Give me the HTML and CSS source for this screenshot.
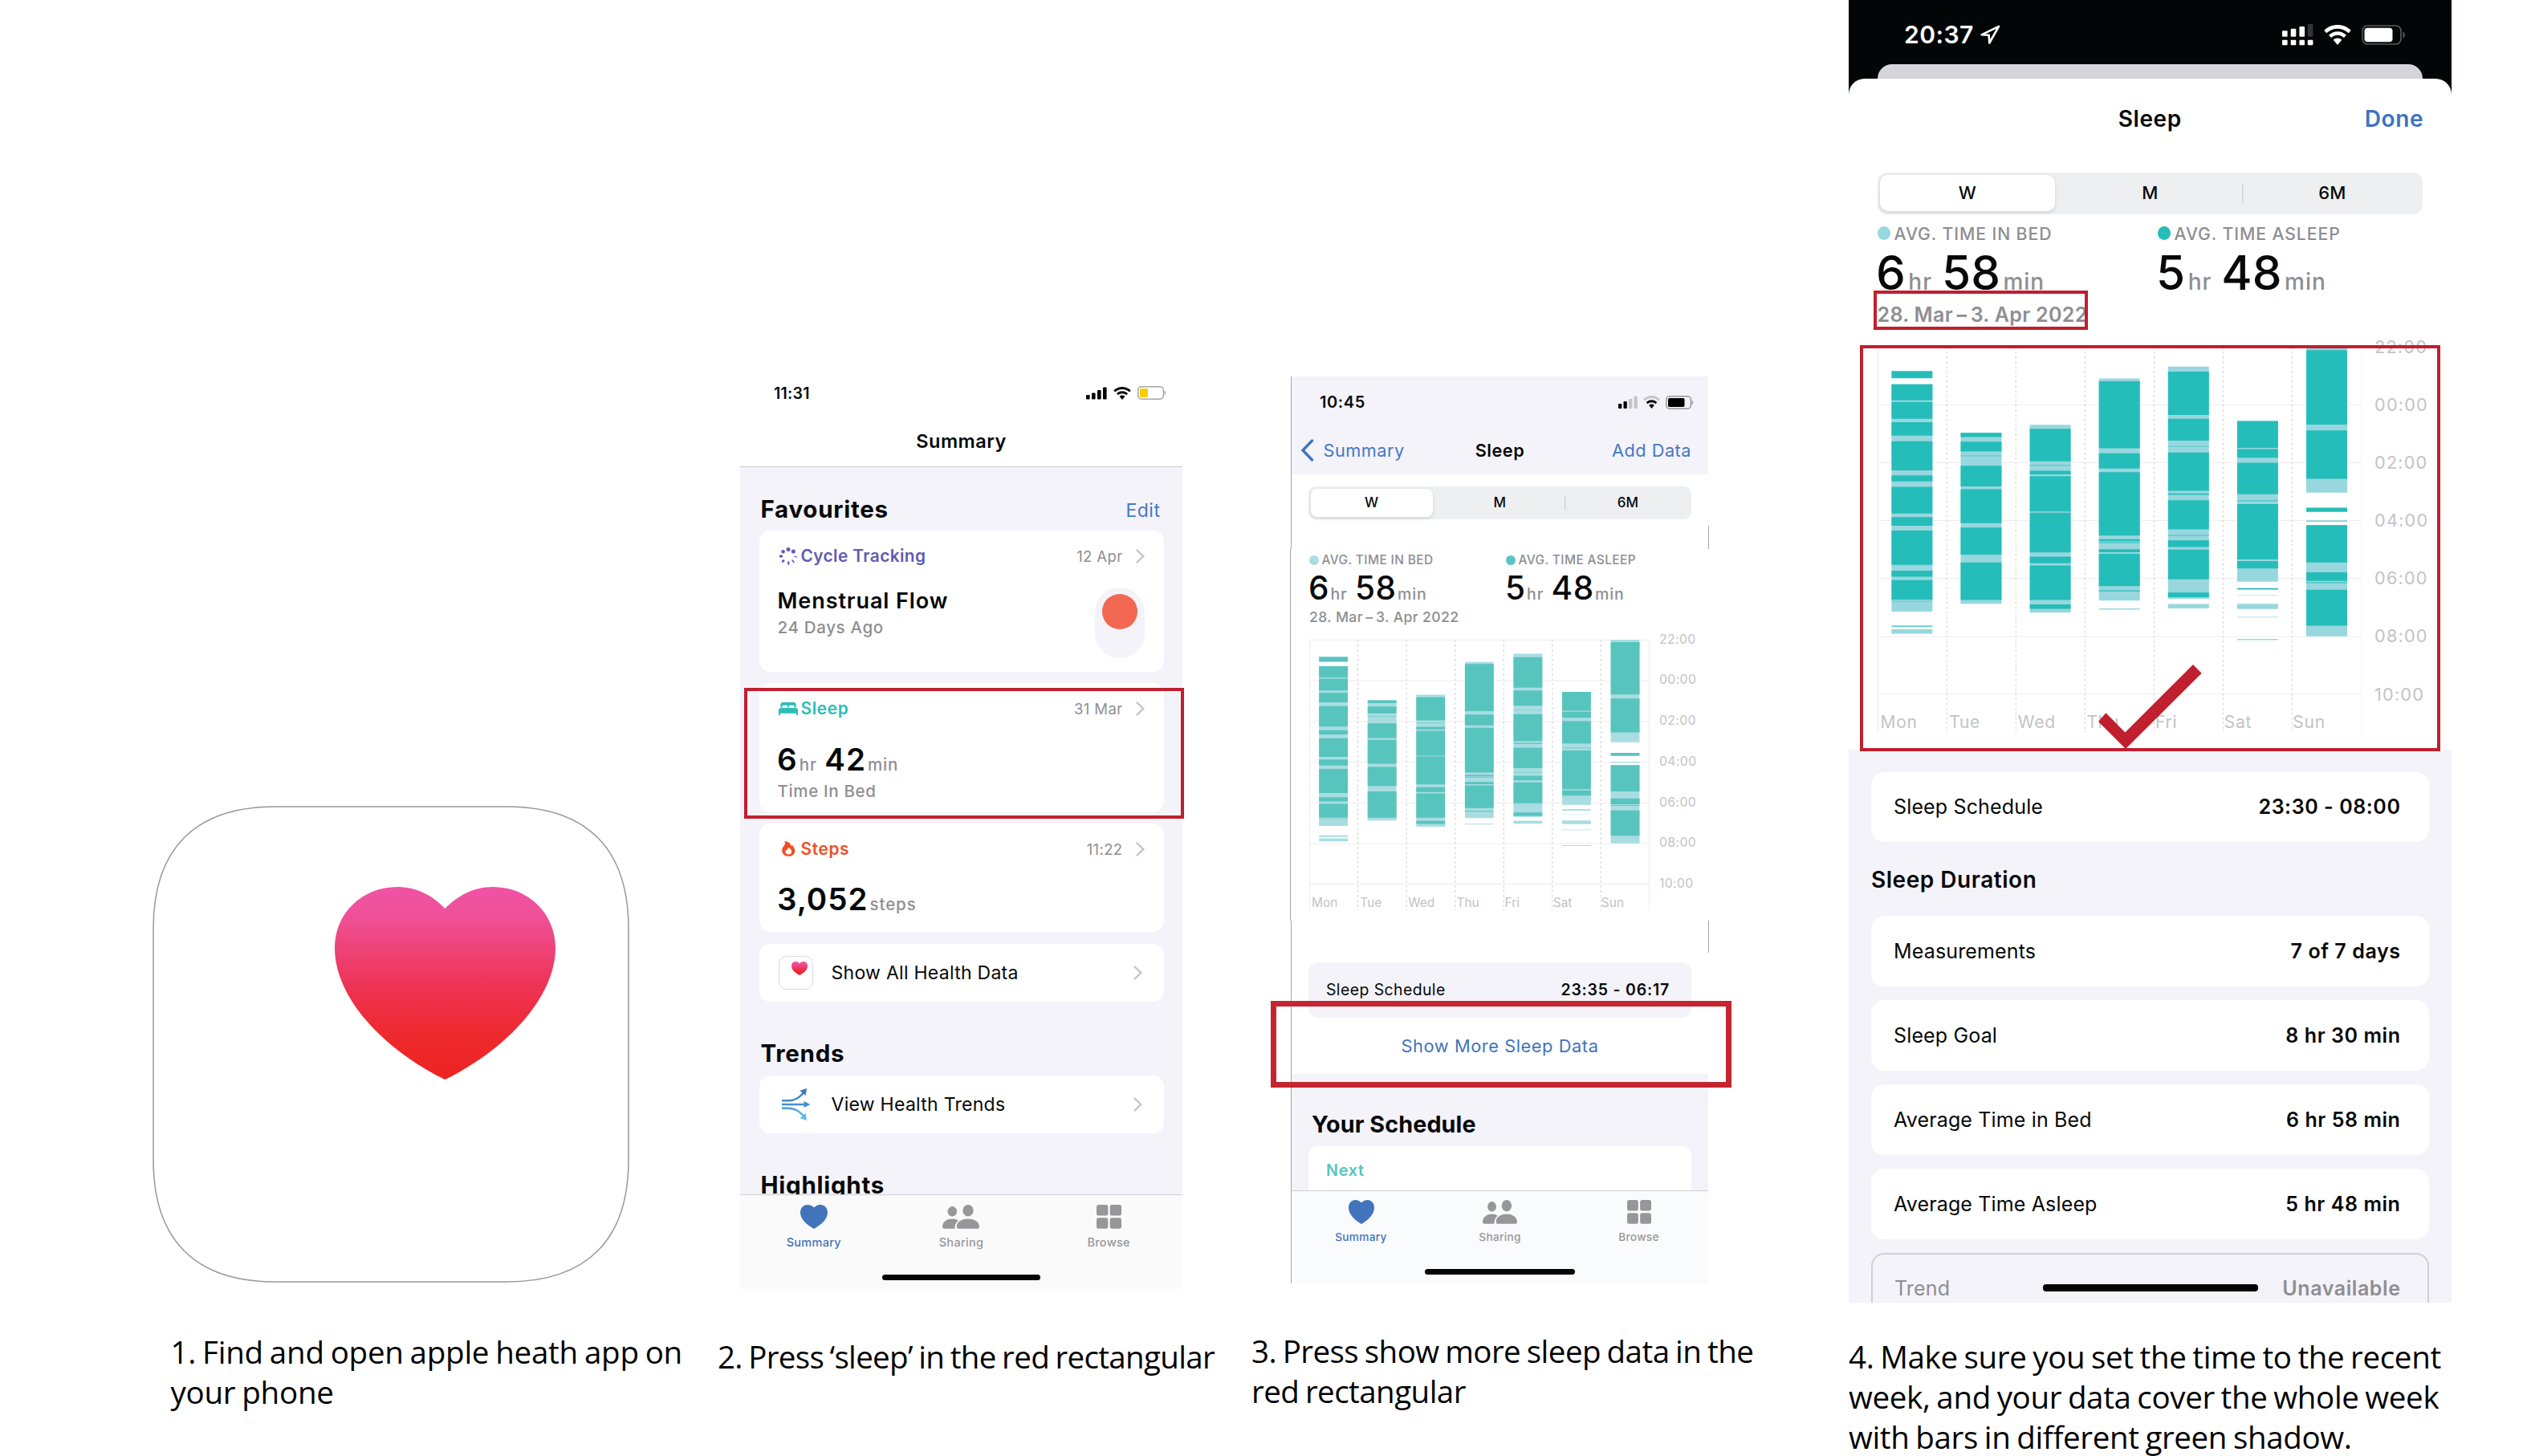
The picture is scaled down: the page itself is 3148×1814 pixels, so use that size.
FILE: index.html
```html
<!DOCTYPE html>
<html lang="en">
<head>
<meta charset="utf-8">
<title>How to find your sleep data</title>
<link rel="stylesheet" href="styles.css">
</head>
<body>
<svg class="defs" aria-hidden="true">
  <defs>
    <linearGradient id="pink-red" x1="0" y1="0" x2="0" y2="1">
      <stop offset="0" stop-color="#ef53a4"/>
      <stop offset=".15" stop-color="#ef5098"/>
      <stop offset=".52" stop-color="#ee3354"/>
      <stop offset=".75" stop-color="#ee2a30"/>
      <stop offset="1" stop-color="#ed2320"/>
    </linearGradient>
    <linearGradient id="blues" gradientUnits="userSpaceOnUse" x1="0" y1="0" x2="0" y2="40">
      <stop offset="0" stop-color="#3b6fb9"/>
      <stop offset=".5" stop-color="#4190d0"/>
      <stop offset="1" stop-color="#68c4f0"/>
    </linearGradient>
  </defs>
  <symbol id="heart" viewBox="0 0 34 30" preserveAspectRatio="none"><path d="M17 3.600C19 1.200 22 0 25 0c5 0 9 4 9 9.400C34 18.500 25 25.500 17 30 9 25.500 0 18.500 0 9.400 0 4 4 0 9 0c3 0 6 1.200 8 3.600z"/></symbol>
  <symbol id="people" viewBox="0 0 46 30" preserveAspectRatio="none"><ellipse cx="12.300" cy="8.300" rx="5.800" ry="6.200"/><ellipse cx="32" cy="7.200" rx="6.600" ry="7.200"/><path d="M0 27c0-5 5-9.500 12.300-9.500 3 0 5.600.8 7.600 2-2.800 2.400-4.400 5.800-4.400 8.800 0 .6 0 1.100.3 1.500H2.500C.8 29.800 0 28.800 0 27z"/><path d="M17.800 27c0-5 5.600-9.500 14.100-9.500S46 22 46 27c0 1.900-.9 2.800-2.600 2.800h-23c-1.700 0-2.600-.9-2.600-2.800z"/></symbol>
  <symbol id="tiles" viewBox="0 0 31 30" preserveAspectRatio="none"><rect width="14.300" height="13.600" rx="2.500"/><rect x="16.700" width="14.300" height="13.600" rx="2.500"/><rect y="16.200" width="14.300" height="13.600" rx="2.500"/><rect x="16.700" y="16.200" width="14.300" height="13.600" rx="2.500"/></symbol>
  <symbol id="chev" viewBox="0 0 11 18"><path d="M1.500 1.500 9.300 9l-7.800 7.500" fill="none" stroke="#c3c3c6" stroke-width="2.300" stroke-linecap="round"/></symbol>
  <symbol id="wifi" viewBox="0 0 22 16" preserveAspectRatio="none"><path class="far" d="M11 0C6.800 0 3 1.700.2 4.400l2 2.100C4.500 4.300 7.600 3 11 3s6.500 1.300 8.800 3.500l2-2.100C19 1.700 15.200 0 11 0z"/><path d="M11 5.300c-2.800 0-5.300 1.100-7.100 2.900l2 2.100C7.200 9 9 8.200 11 8.200s3.800.8 5.100 2.100l2-2.100C16.300 6.400 13.800 5.300 11 5.300z"/><path d="M11 10.600c-1.300 0-2.500.5-3.400 1.400L11 16l3.400-4c-.9-.9-2.100-1.400-3.400-1.400z"/></symbol>
  <symbol id="bars" viewBox="0 64 700 1258" preserveAspectRatio="none">
    <path class="inbed" d="M20.100 200h59.200v823h-59.200zM20.100 1087h59.200v16h-59.200zM120.100 376h59.200v619h-59.200zM220.100 347h59.200v680h-59.200zM320.100 179h59.200v804h-59.200zM320.100 1012h59.200v4h-59.200zM420.100 136h59.200v841h-59.200zM420.100 996h59.200v16h-59.200zM520.100 333h59.200v582h-59.200zM520.100 962h59.200v1.500h-59.200zM520.100 995h59.200v19h-59.200zM520.100 1042h59.200v2.500h-59.200zM520.100 1122.500h59.200v4h-59.200zM620.100 64h59.200v528h-59.200zM620.100 693h59.200v5h-59.200zM620.100 710h59.200v403h-59.200z"/>
    <path class="asleep" d="M20.100 152h59.200v26h-59.200zM20.100 200h59.200v58h-59.200zM20.100 264h59.200v61h-59.200zM20.100 337h59.200v49h-59.200zM20.100 406h59.200v106h-59.200zM20.100 530h59.200v22h-59.200zM20.100 571h59.200v97h-59.200zM20.100 681h59.200v31h-59.200zM20.100 730h59.200v124h-59.200zM20.100 875h59.200v22h-59.200zM20.100 909h59.200v71h-59.200zM20.100 1074h59.200v4h-59.200z
      M120.100 376h59.200v15h-59.200zM120.100 408h59.200v35h-59.200zM120.100 495h59.200v75h-59.200zM120.100 580h59.200v123h-59.200zM120.100 719h59.200v98h-59.200zM120.100 845h59.200v136h-59.200z
      M220.100 361h59.200v118h-59.200zM220.100 513h59.200v13h-59.200zM220.100 533h59.200v128h-59.200zM220.100 665h59.200v144h-59.200zM220.100 824h59.200v24h-59.200zM220.100 856h59.200v125h-59.200zM220.100 997h59.200v16h-59.200z
      M320.100 189h59.200v243h-59.200zM320.100 450h59.200v55h-59.200zM320.100 518h59.200v230h-59.200zM320.100 761h59.200v7h-59.200zM320.100 771.500h59.200v3h-59.200zM320.100 797h59.200v11h-59.200zM320.100 814h59.200v117h-59.200zM320.100 946h59.200v4h-59.200z
      M420.100 154h59.200v157h-59.200zM420.100 325h59.200v79h-59.200zM420.100 447h59.200v139h-59.200zM420.100 595h59.200v5h-59.200zM420.100 620h59.200v105h-59.200zM420.100 765h59.200v24h-59.200zM420.100 799h59.200v107h-59.200zM420.100 954h59.200v17h-59.200z
      M520.100 333h59.200v97h-59.200zM520.100 435h59.200v31h-59.200zM520.100 484h59.200v114h-59.200zM520.100 634h59.200v200h-59.200zM520.100 840h59.200v27h-59.200zM520.100 938h59.200v5h-59.200z
      M620.100 76h59.200v270h-59.200zM620.100 367h59.200v175h-59.200zM620.100 647h59.200v15h-59.200zM620.100 710h59.200v135h-59.200zM620.100 881h59.200v31h-59.200zM620.100 917h59.200v3h-59.200zM620.100 944h59.200v130h-59.200z"/>
    <path class="asleep dozing" d="M20.100 984h59.200v3h-59.200zM120.100 457h59.200v4h-59.200zM220.100 491h59.200v4h-59.200zM420.100 423.500h59.200v3h-59.200zM420.100 746h59.200v4h-59.200zM520.100 619h59.200v5h-59.200zM620.100 694h59.200v3h-59.200z"/>
  </symbol>
</svg>

<main class="guide">

  <section class="step step-1">
    <svg class="app-icon" viewBox="0 0 594 594">
      <path d="M153 1H441C541 1 593 53 593 153V441C593 541 541 593 441 593H153C53 593 1 541 1 441V153C1 53 53 1 153 1z" fill="#fff" stroke="#98989a" stroke-width="1.500"/>
      <path d="M364.400 128C380 112 400 101 424 101 468 101 502 134 502 177 502 240 438 305 364.400 341 290 305 227 240 227 177 227 134 261 101 305 101 329 101 349 112 364.400 128z" fill="url(#pink-red)"/>
    </svg>
    <p class="caption">1. Find and open apple heath app on<br>your phone</p>
  </section>

  <section class="step step-2">
    <div class="phone">
      <div class="status">
        <span class="clock">11:31</span>
        <span class="status-icons">
          <svg width="26" height="16" viewBox="0 0 26 16"><rect y="10" width="4.600" height="5.500" rx="1"/><rect x="7" y="7.500" width="4.600" height="8" rx="1"/><rect x="14" y="4" width="4.600" height="11.500" rx="1"/><rect x="21" y=".5" width="4.600" height="15" rx="1"/></svg>
          <svg class="wifi" width="22" height="16"><use href="#wifi"/></svg>
          <svg width="36" height="17" viewBox="0 0 36 17"><rect x=".8" y=".8" width="31.600" height="15.400" rx="4.200" fill="none" stroke="#a5a5a7" stroke-width="1.500"/><path d="M33.600 5.500c2 .8 2 5.200 0 6z" fill="#a5a5a7"/><rect x="3" y="3" width="10" height="11" rx="1.800" fill="#fc0"/></svg>
        </span>
      </div>
      <h1 class="nav-title">Summary</h1>
      <div class="scroll">
        <div class="section-head first"><h2>Favourites</h2><a class="link">Edit</a></div>
        <article class="card cycle">
          <header><svg width="24" height="22" viewBox="0 0 24 22" fill="#5f5bb3"><circle cx="12" cy="2.500" r="2.500"/><circle cx="18.300" cy="5" r="2.500"/><circle cx="5.600" cy="5.200" r="2.300"/><ellipse cx="3" cy="11" rx="2.300" ry="1.800"/><ellipse cx="5.600" cy="17" rx="2.200" ry="1.500" transform="rotate(-45 5.600 17)"/><ellipse cx="12.300" cy="19.500" rx="1.200" ry="2.400"/><ellipse cx="18" cy="17.300" rx=".9" ry="2.600" transform="rotate(-35 18 17.300)"/><ellipse cx="21" cy="11.700" rx="2.300" ry=".6" transform="rotate(15 21 11.700)"/></svg><b class="violet">Cycle Tracking</b><time>12 Apr</time><svg class="chev"><use href="#chev"/></svg></header>
          <div class="cycle-body">
            <div><h3>Menstrual Flow</h3><p class="note">24 Days Ago</p></div>
            <span class="pill"><i></i></span>
          </div>
        </article>
        <article class="card sleep">
          <header><svg width="24" height="16" viewBox="0 0 24 16" fill="#2bbdb9"><path d="M2.300 6.500V3C2.300 1 3.400 0 5.200 0h13.600c1.800 0 2.900 1 2.900 3v3.500h-2.200V5c0-.9-.5-1.300-1.300-1.300h-4c-.8 0-1.300.4-1.300 1.300v1.500h-1.800V5c0-.9-.5-1.300-1.300-1.300h-4C5 3.700 4.500 4.100 4.500 5v1.500z"/><path d="M0 15.300V10c0-1.900 1-2.900 2.800-2.900h18.400C23 7.100 24 8.100 24 10v5.300c0 .4-.3.700-.7.700h-.7c-.4 0-.7-.3-.7-.7v-1.600H2.100v1.600c0 .4-.3.700-.7.700H.7c-.4 0-.7-.3-.7-.7z"/></svg><b class="teal">Sleep</b><time>31 Mar</time><svg class="chev"><use href="#chev"/></svg></header>
          <p class="figure"><b>6</b><i>hr</i><b>42</b><i>min</i></p>
          <p class="note">Time In Bed</p>
        </article>
        <article class="card steps">
          <header><svg width="24" height="19" viewBox="-4 0 24 19"><path d="M3 .3C7.500 0 11 2.600 11.600 6.200c.6-.4.8-1 .8-1.700 2.400 2.200 3.800 4.900 3.800 7.400 0 4.100-3.200 6.900-8 6.900C3.500 18.800.2 15.900.2 11.700c0-3 1.500-4.800 3-6.600C4.300 3.600 4.400 1.700 3 .3z" fill="#f04f23"/><path d="M8.300 8c2.400 1 3.800 3 3.800 5 0 2.100-1.500 3.500-3.800 3.500S4.500 15.200 4.500 13c0-1 .4-1.900 1-2.600.4.600.9.900 1.500 1C7 10.200 7.400 9 8.300 8z" fill="#fff"/></svg><b class="orange">Steps</b><time>11:22</time><svg class="chev"><use href="#chev"/></svg></header>
          <p class="figure"><b>3,052</b><i>steps</i></p>
        </article>
        <a class="card row"><svg width="43" height="42" viewBox="0 0 43 42"><rect x=".6" y=".6" width="41.800" height="40.800" rx="9" fill="#fff" stroke="#d8d8da"/><path d="M26 9.500C29 5.500 36 6.500 36 12.500c0 5-5 9-10 11.500-5-2.500-10-6.500-10-11.500 0-6 7-7 10-3z" fill="url(#pink-red)"/></svg><span>Show All Health Data</span><svg class="chev"><use href="#chev"/></svg></a>
        <div class="section-head"><h2>Trends</h2></div>
        <a class="card row"><svg width="43" height="40" viewBox="-4 0 43 40"><g fill="none" stroke="url(#blues)" stroke-width="2.400"><path d="M0 15.200h8c9 0 14-4 19.500-10.200"/><path d="M0 20.050 29 20"/><path d="M0 24.800h8c9 0 14 4 19.500 10.200"/></g><g fill="url(#blues)"><path d="M31 0l-1.500 9-7-6.200zM35.500 20l-8 4v-8zM31 40l-1.500-9-7 6.200z"/></g></svg><span>View Health Trends</span><svg class="chev"><use href="#chev"/></svg></a>
        <div class="section-head"><h2>Highlights</h2></div>
      </div>
      <nav class="tabs">
        <a class="on"><svg width="34" height="30"><use href="#heart"/></svg><span>Summary</span></a>
        <a><svg width="46" height="30"><use href="#people"/></svg><span>Sharing</span></a>
        <a><svg width="31" height="30"><use href="#tiles"/></svg><span>Browse</span></a>
      </nav>
      <span class="home-bar"></span>
      <span class="mark"></span>
    </div>
    <p class="caption">2. Press ‘sleep’ in the red rectangular</p>
  </section>

  <section class="step step-3">
    <div class="phone">
      <div class="head">
        <div class="status">
          <span class="clock">10:45</span>
          <span class="status-icons">
            <svg width="24" height="16" viewBox="0 0 24 16"><rect y="10" width="4.300" height="6" rx="1"/><rect x="6.500" y="7" width="4.300" height="9" rx="1"/><g fill="#c4c4c8"><rect x="13" y="4" width="4.300" height="12" rx="1"/><rect x="19.500" y=".5" width="4.300" height="15.500" rx="1"/></g></svg>
            <svg class="wifi weak" width="21" height="16"><use href="#wifi"/></svg>
            <svg width="35" height="17" viewBox="0 0 35 17"><rect x=".8" y=".8" width="30.600" height="15.400" rx="4.200" fill="none" stroke="#98989b" stroke-width="1.500"/><path d="M32.600 5.500c2 .8 2 5.200 0 6z" fill="#98989b"/><rect x="3" y="3" width="20.500" height="11" rx="1.800"/></svg>
          </span>
        </div>
        <div class="nav">
          <a class="back"><svg width="17" height="28" viewBox="0 0 17 28"><path d="M14.500 2 3 14l11.500 12" fill="none" stroke="#3f74c1" stroke-width="3.400" stroke-linecap="round"/></svg><span>Summary</span></a>
          <b>Sleep</b>
          <a class="add">Add Data</a>
        </div>
      </div>
      <div class="range">
        <div class="segments"><span class="on">W</span><span>M</span><span>6M</span></div>
      </div>
      <div class="panel">
        <div class="averages">
          <div><p class="kicker bed"><i></i><span>AVG. TIME IN BED</span></p><p class="figure"><b>6</b><i>hr</i><b>58</b><i>min</i></p></div>
          <div><p class="kicker"><i></i><span>AVG. TIME ASLEEP</span></p><p class="figure"><b>5</b><i>hr</i><b>48</b><i>min</i></p></div>
        </div>
        <p class="dates">28. Mar&#8201;–&#8201;3. Apr 2022</p>
        <div class="chart">
          <div class="plot">
            <svg viewBox="0 0 424 338">
              <path class="rule" d="M0 .5h424M0 51.200h424M0 101.900h424M0 152.600h424M0 203.300h424M0 254h424M0 304.500h424M.5 0v337M423.500 0v337"/>
              <path class="dash" d="M60.600 0v337M121.100 0v337M181.700 0v337M242.300 0v337M302.900 0v337M363.400 0v337"/>
              <use href="#bars" width="424" height="304.300"/>
            </svg>
            <div class="days"><span>Mon</span><span>Tue</span><span>Wed</span><span>Thu</span><span>Fri</span><span>Sat</span><span>Sun</span></div>
          </div>
          <div class="hours"><span>22:00</span><span>00:00</span><span>02:00</span><span>04:00</span><span>06:00</span><span>08:00</span><span>10:00</span></div>
        </div>
      </div>
      <div class="after">
        <div class="schedule"><span>Sleep Schedule</span><b>23:35 - 06:17</b></div>
        <a class="more">Show More Sleep Data</a>
      </div>
      <div class="next">
        <h2>Your Schedule</h2>
        <div class="next-card"><b>Next</b></div>
      </div>
      <nav class="tabs">
        <a class="on"><svg width="32" height="30"><use href="#heart"/></svg><span>Summary</span></a>
        <a><svg width="43" height="30"><use href="#people"/></svg><span>Sharing</span></a>
        <a><svg width="30" height="30"><use href="#tiles"/></svg><span>Browse</span></a>
      </nav>
      <span class="home-bar"></span>
      <span class="mark"></span>
    </div>
    <p class="caption">3. Press show more sleep data in the<br>red rectangular</p>
  </section>

  <section class="step step-4">
    <div class="phone">
      <div class="status">
        <span class="clock">20:37</span>
        <svg class="arrow" width="26" height="25" viewBox="0 0 26 25"><path d="M24 1.800 2.500 12.300l9.200.5.600 9.700z" fill="none" stroke="#fff" stroke-width="2.600" stroke-linejoin="round"/></svg>
        <span class="status-icons">
          <svg width="39" height="27" viewBox="0 0 39 27" fill="#fff"><rect y="8.300" width="6.600" height="7.400" rx="1"/><rect x="10.700" y="5.700" width="6.600" height="10" rx="1"/><rect x="21.400" y="3" width="6.600" height="12.700" rx="1"/><rect x="31.800" width="6.600" height="15.700" rx="1" fill="#333"/><rect y="19.700" width="6.600" height="6.600" rx="1"/><rect x="10.700" y="19.700" width="6.600" height="6.600" rx="1"/><rect x="21.400" y="19.700" width="6.600" height="6.600" rx="1"/><rect x="31.800" y="19.700" width="6.600" height="6.600" rx="1"/></svg>
          <svg class="wifi" width="34" height="25"><use href="#wifi"/></svg>
          <svg width="55" height="25" viewBox="0 0 55 25"><rect x="1" y="1" width="48" height="23" rx="6.500" fill="none" stroke="#59595b" stroke-width="1.600"/><path d="M51.500 8.500c3 1 3 7 0 8z" fill="#59595b"/><rect x="3.500" y="3.700" width="35" height="17.600" rx="4" fill="#fff"/></svg>
        </span>
      </div>
      <div class="sheet-behind"></div>
      <div class="sheet">
        <div class="nav"><b>Sleep</b><a class="done">Done</a></div>
        <div class="segments"><span class="on">W</span><span>M</span><span>6M</span></div>
        <div class="averages">
          <div><p class="kicker bed"><i></i><span>AVG. TIME IN BED</span></p><p class="figure"><b>6</b><i>hr</i><b>58</b><i>min</i></p></div>
          <div><p class="kicker"><i></i><span>AVG. TIME ASLEEP</span></p><p class="figure"><b>5</b><i>hr</i><b>48</b><i>min</i></p></div>
        </div>
        <p class="dates">28. Mar&#8201;–&#8201;3. Apr 2022</p>
        <div class="chart">
          <div class="plot">
            <svg viewBox="0 0 604 482">
              <path class="rule" d="M0 72.300h604M0 144.500h604M0 216.600h604M0 289h604M0 361.500h604M0 433.200h604M.5 0v481M603.500 0v481"/>
              <path class="dash" d="M86.200 0v481M172.400 0v481M258.600 0v481M344.800 0v481M431 0v481M516.800 0v481"/>
              <use href="#bars" width="603.400" height="433.200"/>
            </svg>
            <div class="days"><span>Mon</span><span>Tue</span><span>Wed</span><span>Thu</span><span>Fri</span><span>Sat</span><span>Sun</span></div>
          </div>
          <div class="hours"><span>22:00</span><span>00:00</span><span>02:00</span><span>04:00</span><span>06:00</span><span>08:00</span><span>10:00</span></div>
        </div>
      </div>
      <div class="details">
        <div class="detail"><span>Sleep Schedule</span><b>23:30 - 08:00</b></div>
        <h2>Sleep Duration</h2>
        <div class="detail-list">
          <div class="detail"><span>Measurements</span><b>7 of 7 days</b></div>
          <div class="detail"><span>Sleep Goal</span><b>8 hr 30 min</b></div>
          <div class="detail"><span>Average Time in Bed</span><b>6 hr 58 min</b></div>
          <div class="detail"><span>Average Time Asleep</span><b>5 hr 48 min</b></div>
          <div class="detail off"><span>Trend</span><b>Unavailable</b></div>
        </div>
      </div>
      <span class="home-bar"></span>
      <span class="mark mark-dates"></span>
      <span class="mark mark-chart"></span>
      <svg class="tick" viewBox="0 0 130 106"><path d="M0 71 9.400 60.300l24 24.100L118 0l10.700 10.700L34 105z" fill="#c01f2e"/></svg>
    </div>
    <p class="caption">4. Make sure you set the time to the recent<br>week, and your data cover the whole week<br>with bars in different green shadow.</p>
  </section>
</main>
</body>
</html>
```
FILE: styles.css
```css
* { box-sizing: border-box; }

body {
  margin: 0;
  background: #fff;
  color: #060809;
  font-family: Inter, "Liberation Sans", sans-serif;
  font-optical-sizing: none;
}

h1, h2, h3, p { margin: 0; }
i { font-style: normal; }
b { font-weight: 600; }
svg { display: block; flex: none; }
.defs { position: absolute; width: 0; height: 0; }

.guide {
  display: grid;
  grid-template-columns: 885px 675px 743px 1fr;
  width: 3148px;
  height: 1814px;
  overflow: hidden;
}

.caption {
  font: 400 38.500px/50px "Open Sans", "Noto Sans", sans-serif;
  color: #000;
  white-space: nowrap;
  word-spacing: -.048em;
}

.phone {
  position: relative;
  display: flex;
  flex-direction: column;
}
.phone > * { flex: none; }

.status, .status-icons, .nav { display: flex; align-items: center; }
.status-icons { margin-left: auto; }
.clock { font-weight: 600; letter-spacing: .015em; }
.wifi { fill: #060809; }
.wifi.weak { --far: #c4c4c8; }
.far { fill: var(--far, inherit); }

.mark {
  position: absolute;
  border: 4px solid #c01f2e;
}

.home-bar {
  align-self: center;
  background: #030506;
  border-radius: 4px;
}

.tabs {
  display: grid;
  grid-template-columns: repeat(3, 1fr);
  border-top: 1px solid #cfcfd6;
  color: #979799;
  fill: #979799;
  font-weight: 500;
  letter-spacing: .021em;
}
.tabs a { display: flex; flex-direction: column; align-items: center; }
.tabs .on { color: #4274bb; fill: #4274bb; }

.figure { display: flex; align-items: baseline; }
.figure i { color: #8e8e92; font-weight: 500; line-height: 1; }

/* Step 1: app icon */
.step-1 { padding: 1003.500px 0 0 190px; }
.app-icon { width: 594px; height: 594px; }
.step-1 .caption { margin: 61px 0 0 22.500px; letter-spacing: -.006em; }

/* Step 2: summary screen */
.step-2 { padding-top: 460px; }
.step-2 .phone { width: 551px; height: 1146px; margin-left: 37px; background: linear-gradient(#fff 90%, #fafafb 90%); }
.step-2 .status { height: 59px; padding: 0 20px 0 42px; }
.step-2 .status-icons { gap: 8px; }
.step-2 .clock { font-size: 19.500px; }
.nav-title {
  height: 63px;
  border-bottom: 1px solid #cbcbcf;
  font-size: 23.500px;
  font-weight: 600;
  letter-spacing: .022em;
  line-height: 62px;
  text-align: center;
}
.scroll {
  height: 906px;
  padding: 0 23.500px;
  overflow: hidden;
  background: #f4f3f9;
}
.section-head {
  display: flex;
  justify-content: space-between;
  align-items: center;
  padding: 49.500px 4px 12.700px 2px;
}
.section-head.first { padding-top: 36.500px; }
.section-head h2 { font-size: 29.500px; font-weight: 700; letter-spacing: .025em; line-height: 30px; }
.link { margin: 2px 0 -2px; color: #4478c4; font-size: 23px; letter-spacing: .023em; line-height: 30px; }
.card {
  margin-bottom: 14px;
  padding: 0 24px;
  border-radius: 14px;
  background: #fff;
}
.card header { display: flex; align-items: center; height: 63px; }
.card header b { margin-left: 4px; font-size: 20.800px; letter-spacing: .02em; }
.card header .teal, .card header .orange { letter-spacing: .032em; }
.card time { margin-left: auto; color: #8e8e92; font-size: 18.500px; letter-spacing: .02em; }
.chev { width: 11px; height: 18px; margin-left: 16px; }
.card h3 { font-size: 27px; font-weight: 600; letter-spacing: .034em; line-height: 34px; }
.note { color: #8e8e92; font-size: 20.500px; font-weight: 500; letter-spacing: .032em; line-height: 28px; }
.violet { color: #5f5bb3; }
.teal { color: #2bbdb9; }
.orange { color: #f04f23; }
.cycle { height: 176px; }
.cycle-body { display: flex; justify-content: space-between; padding-top: 7.500px; }
.cycle-body > div, .sleep .note { margin-left: -1px; }
.cycle-body .note { margin-top: 2px; }
.pill {
  width: 62px;
  height: 88px;
  padding: 8.500px 9px;
  border-radius: 31px;
  background: #f4f3f9;
}
.pill i { display: block; height: 43.500px; border-radius: 50%; background: #f26852; }
.sleep { height: 161px; }
.step-2 .figure { margin-left: -1.500px; padding-top: 12px; line-height: 40px; }
.step-2 .figure b { font-size: 38.500px; letter-spacing: .026em; }
.step-2 .figure i { margin: 0 9.500px 0 2px; font-size: 20.500px; letter-spacing: .045em; }
.sleep .note { margin-top: 5.500px; }
.steps { height: 135px; margin-bottom: 15px; }
.steps .figure { padding-top: 11px; }
.row { display: flex; align-items: center; height: 72px; font-size: 23px; letter-spacing: .012em; }
.row span { margin-left: 23px; }
.row .chev { margin: 0 3px 0 auto; }
.row + .section-head { margin-top: -14.500px; }
.step-2 .tabs { height: 100px; padding-top: 12px; background: #fafafb; font-size: 14.500px; line-height: 18px; }
.step-2 .tabs svg { margin-bottom: 8px; }
.step-2 .home-bar { width: 197px; height: 7px; }
.step-2 .mark { left: 5px; top: 397px; width: 548px; height: 163px; }
.step-2 .caption { margin: 58.700px 0 0 9px; letter-spacing: -.0175em; }

/* Step 3: sleep screen */
.step-3 { padding-top: 469px; }
.step-3 .phone { width: 520px; height: 1129.500px; margin-left: 48px; background: #fafbfc; }
.step-3 .head, .range, .panel, .after, .next, .step-3 .tabs { border-left: 1px solid #a6a6a8; }
.step-3 .head { height: 122px; background: #f4f3f9; }
.step-3 .status { height: 64px; padding: 0 18px 0 35px; }
.step-3 .status-icons { gap: 7px; }
.step-3 .clock { font-size: 20px; letter-spacing: .03em; }
.step-3 .nav { display: grid; grid-template-columns: 1fr auto 1fr; height: 56px; padding: 0 21px; font-size: 21.700px; letter-spacing: .024em; }
.back { display: flex; align-items: center; gap: 11.500px; margin-left: -10px; color: #4478c4; }
.add { color: #4478c4; text-align: right; }
.range { position: relative; height: 93px; padding: 15px 21px 0; background: #fff; }
.range::after, .after::after {
  content: "";
  position: absolute;
  right: -1px;
  bottom: 0;
  width: 1px;
  height: 29px;
  background: #a6a6a8;
}
.segments {
  display: grid;
  grid-template-columns: repeat(3, 1fr);
  align-items: center;
  border-radius: 9px;
  background: #eeeff1;
  font-weight: 500;
  text-align: center;
}
.segments .on { background: #fff; box-shadow: 0 2px 5px rgba(0, 0, 0, .12); }
.segments span:nth-child(2) { padding-right: 3px; }
.step-3 .segments { height: 41px; padding: 2.500px 0 2.500px 2.500px; font-size: 17px; line-height: 35px; }
.step-3 .segments .on { margin-right: 6px; border-radius: 8px; }
.segments span:last-child {
  background: linear-gradient(#d3d3d6, #d3d3d6) no-repeat 0 50% / 1.500px 55%;
}
.panel { height: 463px; margin-left: -1px; padding: 3.500px 0 0 23px; background: #fff; }
.averages { display: grid; }
.step-3 .averages { grid-template-columns: 245px 1fr; }
.kicker { display: flex; align-items: center; color: #8e8e92; font-weight: 500; white-space: nowrap; }
.kicker i { border-radius: 50%; background: #5bc4bf; }
.step-3 .kicker { font-size: 15.400px; letter-spacing: .027em; line-height: 20px; }
.step-3 .kicker i { width: 11.500px; height: 12px; margin-right: 4px; }
.step-3 .kicker.bed i { background: #a8dde1; }
.averages .figure b { font-weight: 500; }
.step-3 .figure { margin-left: -1px; padding-top: 3px; line-height: 44px; }
.step-3 .figure b { font-size: 40.500px; letter-spacing: .012em; }
.step-3 .figure i { margin: 0 9.500px 0 1.500px; font-size: 19.500px; letter-spacing: .045em; }
.dates { color: #8e8e92; font-weight: 500; white-space: nowrap; }
.step-3 .dates { margin-top: 4px; font-size: 17.600px; letter-spacing: .022em; line-height: 20px; }
.chart { display: flex; }
.plot { position: relative; display: flex; flex: none; align-items: flex-end; }
.plot svg { position: absolute; left: 0; top: 0; width: 100%; height: 100%; }
.rule { fill: none; stroke: #ececee; stroke-width: 1; }
.dash { fill: none; stroke: #d2d2d4; stroke-width: 1; stroke-dasharray: 3 3; }
.inbed { fill: var(--inbed); }
.asleep { fill: var(--asleep); }
.dozing { opacity: .5; }
.days { position: relative; display: grid; grid-template-columns: repeat(7, 1fr); width: 100%; }
.days, .hours { color: #c3c3c5; }
.hours { display: flex; flex-direction: column; justify-content: space-between; }
.hours span { height: 0; line-height: 0; }
.step-3 .chart { --inbed: #a8dde1; --asleep: #58c4be; margin-top: 18px; }
.step-3 .plot { width: 424px; height: 338px; }
.step-3 .days { padding-left: 3px; font-size: 15.500px; line-height: 20px; }
.step-3 .hours { height: 304.500px; margin-left: 12px; font-size: 15.800px; letter-spacing: .023em; }
.after { position: relative; height: 190.500px; padding: 51.500px 21px 0; background: #fff; }
.after::after { top: 0; height: 40px; }
.schedule {
  display: flex;
  justify-content: space-between;
  align-items: center;
  height: 69px;
  padding: 0 27px 0 22px;
  border-radius: 12px;
  background: #f4f3f9;
  font-size: 19.400px;
  letter-spacing: .022em;
}
.schedule b { letter-spacing: .043em; }
.more { display: block; margin-top: 20px; color: #4274bb; font-size: 21.800px; letter-spacing: .026em; line-height: 30px; text-align: center; }
.next { height: 145.500px; padding: 48px 21px 0; overflow: hidden; background: #f4f3f9; }
.next h2 { padding-left: 4px; font-size: 28.700px; font-weight: 700; letter-spacing: .004em; line-height: 30px; }
.next-card { height: 80px; margin-top: 12.500px; padding: 20px 22px; border-radius: 12px; background: #fff; color: #5ac4bc; font-size: 19.800px; letter-spacing: .035em; line-height: 20px; }
.step-3 .tabs { height: 115.500px; padding-top: 11px; background: #fafbfc; font-size: 13.700px; line-height: 18px; }
.step-3 .tabs svg { margin-bottom: 7px; }
.step-3 .home-bar { width: 187px; height: 7px; margin-top: -17.500px; }
.step-3 .mark { left: -25px; top: 778px; width: 574px; height: 108px; border-width: 7.500px; border-color: #c42530; }
.step-3 .phone + .caption { margin: 59.500px 0 0 -1px; letter-spacing: -.014em; }

/* Step 4: weekly sleep details */
.step-4 .phone { width: 750.500px; height: 1623px; overflow: hidden; background: linear-gradient(#030607 130px, #f4f3f9 130px); }
.step-4 .status { height: 80px; padding: 6px 57px 0 69px; color: #fff; }
.step-4 .clock { font-size: 30px; }
.arrow { margin-left: 7px; }
.step-4 .wifi { fill: #fff; margin: 0 13px 0 13px; }
.sheet-behind { height: 18px; margin: 0 35.500px; border-radius: 18px 18px 0 0; background: #d6d4db; }
.sheet { height: 836px; padding: 0 35.500px; border-radius: 20px 20px 0 0; background: #fff; }
.step-4 .nav { display: grid; grid-template-columns: 1fr auto 1fr; height: 99px; font-size: 28px; letter-spacing: .02em; }
.step-4 .nav b { grid-column: 2; }
.done { margin-right: -1px; color: #3d74c0; font-weight: 600; text-align: right; }
.step-4 .segments { height: 51.500px; margin-top: 18px; padding: 3px 0 3px 3px; border-radius: 12px; font-size: 22px; line-height: 45px; }
.step-4 .segments .on { margin-right: 7px; border-radius: 10px; }
.step-4 .averages { grid-template-columns: 349px 1fr; margin-top: 12px; }
.step-4 .kicker { font-size: 21.200px; letter-spacing: .043em; line-height: 24px; }
.step-4 .kicker i { width: 16px; height: 16.500px; margin-right: 5px; background: #25bdb9; }
.step-4 .kicker.bed i { background: #98d8de; }
.step-4 .figure { margin-left: -1.500px; padding-top: 7px; line-height: 60px; }
.step-4 .figure b { font-size: 58.500px; }
.step-4 .figure i { margin: 0 12px 0 3.500px; font-size: 28px; letter-spacing: .035em; }
.step-4 .dates { margin-top: 10px; font-size: 25px; font-weight: 600; letter-spacing: .013em; line-height: 24px; }
.step-4 .chart { --inbed: #98d7de; --asleep: #25bdb9; margin-top: 28px; }
.step-4 .plot { width: 603.500px; height: 481.500px; }
.step-4 .days { padding: 0 0 1px 4px; font-size: 21px; letter-spacing: .036em; line-height: 24px; }
.step-4 .hours { height: 433.200px; margin-left: 16px; font-size: 21.700px; letter-spacing: .055em; }
.details { padding: 27.500px 28px 0; background: #f4f3f9; }
.detail {
  display: flex;
  justify-content: space-between;
  align-items: center;
  height: 87.500px;
  padding: 0 35px 0 28px;
  border-radius: 16px;
  background: #fff;
  font-size: 25px;
  letter-spacing: .006em;
}
.detail b { letter-spacing: .023em; }
.details h2 { margin: 31.500px 0 30.500px; font-size: 28px; font-weight: 600; letter-spacing: .019em; line-height: 30px; }
.detail-list { display: grid; gap: 17.600px; }
.detail.off { border: 2px solid #cfcfd5; padding: 0 33px 0 27px; background: none; color: #8e8e92; }
.step-4 .home-bar { position: absolute; left: 242px; top: 1600px; width: 268px; height: 8.500px; }
.mark-dates { left: 30.500px; top: 362px; width: 267.500px; height: 49px; }
.mark-chart { left: 14px; top: 430px; width: 723px; height: 506px; border-width: 4.500px; }
.tick { position: absolute; left: 311px; top: 828px; width: 130px; height: 106px; }
.step-4 .caption { margin-top: 42px; letter-spacing: -.009em; }
```
